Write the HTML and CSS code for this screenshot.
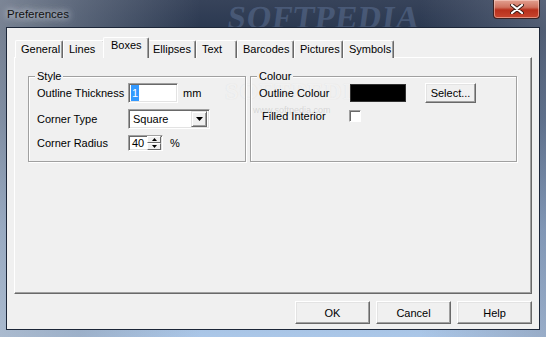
FILE: index.html
```html
<!DOCTYPE html>
<html>
<head>
<meta charset="utf-8">
<link rel="stylesheet" href="styles.css">
</head>
<body>
<div class="window">
  <div class="titlebar">
    <span class="title">Preferences</span>
    <span class="wm-title">SOFTPEDIA</span>
    <div class="close">
      <svg width="14" height="10" viewBox="0 0 14 10"><path d="M2 1 L12 9 M12 1 L2 9" stroke="#3a1a14" stroke-width="4" stroke-linecap="round"/><path d="M2 1 L12 9 M12 1 L2 9" stroke="#fff" stroke-width="2.2" stroke-linecap="round"/></svg>
    </div>
  </div>
  <div class="client">
    <div class="tabs">
      <div class="tab w-general">General</div>
      <div class="tab w-lines">Lines</div>
      <div class="tab active">Boxes</div>
      <div class="tab w-ellipses">Ellipses</div>
      <div class="tab w-text">Text</div>
      <div class="tab w-barcodes">Barcodes</div>
      <div class="tab w-pictures">Pictures</div>
      <div class="tab w-symbols">Symbols</div>
    </div>
    <div class="panel">
      <span class="wm-panel">SOFTPEDIA<small>www.softpedia.com</small></span>
      <div class="group g-style">
        <span class="legend">Style</span>
        <div class="row">
          <span class="lbl">Outline Thickness</span>
          <div class="edit e-thick"><span class="sel">1</span></div>
          <span class="unit">mm</span>
        </div>
        <div class="row">
          <span class="lbl">Corner Type</span>
          <div class="edit combo">
            <span class="combo-text">Square</span>
            <span class="drop"><svg width="7" height="4" viewBox="0 0 7 4"><path d="M0 0 H7 L3.5 4 Z" fill="#000"/></svg></span>
          </div>
        </div>
        <div class="row r-spin">
          <span class="lbl">Corner Radius</span>
          <div class="edit spin">
            <span class="spin-text">40</span>
            <span class="spin-btns">
              <span class="sbtn"><svg width="5" height="3" viewBox="0 0 5 3"><path d="M2.5 0 L5 3 H0 Z" fill="#000"/></svg></span>
              <span class="sbtn"><svg width="5" height="3" viewBox="0 0 5 3"><path d="M0 0 H5 L2.5 3 Z" fill="#000"/></svg></span>
            </span>
          </div>
          <span class="unit pct">%</span>
        </div>
      </div>
      <div class="group g-colour">
        <span class="legend">Colour</span>
        <div class="row">
          <span class="lbl">Outline Colour</span>
          <div class="swatch"></div>
          <div class="btn b-select">Select...</div>
        </div>
        <div class="row r-check">
          <span class="lbl l-check">Filled Interior</span>
          <div class="check"></div>
        </div>
      </div>
    </div>
    <div class="buttons">
      <div class="btn b-dlg">OK</div>
      <div class="btn b-dlg">Cancel</div>
      <div class="btn b-dlg">Help</div>
    </div>
  </div>
</div>
</body>
</html>
```

FILE: styles.css
```css
* { box-sizing: border-box; }
html, body { margin: 0; padding: 0; }
body {
  width: 546px;
  height: 337px;
  overflow: hidden;
  font-family: "Liberation Sans", Arial, sans-serif;
  font-size: 11px;
  color: #000;
}
.window {
  position: relative;
  width: 546px;
  height: 337px;
  display: flex;
  flex-direction: column;
  background:
    linear-gradient(90deg, rgba(170,178,190,0.6) 0, rgba(140,150,165,0.45) 80px, rgba(0,0,0,0) 200px, rgba(0,0,0,0) 420px, rgba(130,140,160,0.45) 546px),
    linear-gradient(180deg, #37435a 0, #2a3850 30px, #42597a 120px, #809fc6 230px, #abc7e8 337px);
}
.titlebar {
  position: relative;
  height: 27px;
  flex: none;
  display: flex;
  align-items: flex-start;
  justify-content: space-between;
}
.title {
  position: relative;
  z-index: 1;
  margin: 8px 0 0 7px;
  font-size: 11.5px;
  color: #111;
  line-height: 13px;
  text-shadow: 0 0 6px rgba(230,235,240,0.9), 0 0 10px rgba(220,225,235,0.8);
}
.wm-title {
  position: absolute;
  left: 228px;
  top: 1px;
  font-family: "Liberation Serif", serif;
  font-weight: bold;
  font-size: 32px;
  line-height: 32px;
  letter-spacing: 1px;
  color: rgba(95,115,150,0.5);
  transform: skewX(-8deg);
}
.close {
  position: relative;
  z-index: 1;
  width: 47px;
  height: 19px;
  margin-right: 6px;
  border: 1px solid #3b2222;
  border-top: none;
  border-radius: 0 0 4px 4px;
  background: linear-gradient(180deg, #e2a090 0, #d0725f 40%, #b8301c 55%, #c8452e 100%);
  box-shadow: inset 0 0 0 1px rgba(255,220,210,0.5);
  display: flex;
  align-items: center;
  justify-content: center;
}
.client {
  position: relative;
  z-index: 2;
  flex: 1;
  margin: 0 6px 7px 6px;
  border: 1px solid #1c2638;
  background: #f0f0f0;
  display: flex;
  flex-direction: column;
}
.tabs {
  display: flex;
  align-items: flex-end;
  padding: 9px 0 0 8px;
  margin-bottom: -1px;
  position: relative;
  z-index: 2;
}
.tab {
  height: 18px;
  border: 1px solid;
  border-color: #fff #696969 transparent #fff;
  border-bottom: none;
  border-radius: 2px 2px 0 0;
  box-shadow: inset -1px 0 0 #a0a0a0;
  background: #f0f0f0;
  padding: 2px 0 0 5px;
  line-height: 13px;
  white-space: nowrap;
}
.tab.active {
  height: 21px;
  width: 46px;
  margin: 0 -2px;
  padding: 1px 0 0 7px;
  position: relative;
  z-index: 3;
}
.w-general { width: 48px; }
.w-lines { width: 42px; }
.w-ellipses { width: 49px; }
.w-text { width: 41px; }
.w-barcodes { width: 57px; }
.w-pictures { width: 49px; }
.w-symbols { width: 51px; }
.panel {
  position: relative;
  margin-left: 7px;
  width: 518px;
  height: 237px;
  flex: none;
  border: 1px solid;
  border-color: #fff #696969 #696969 #fff;
  box-shadow: inset -1px -1px 0 #a0a0a0;
  padding: 18px 0 0 13px;
  display: flex;
  align-items: flex-start;
}
.group {
  position: relative;
  z-index: 1;
  height: 86px;
  border: 1px solid #a0a0a0;
  box-shadow: 1px 1px 0 #fff, inset 1px 1px 0 #fff;
  display: flex;
  flex-direction: column;
}
.g-style { width: 218px; }
.g-colour { width: 267px; margin-left: 4px; }
.legend {
  align-self: flex-start;
  margin: -7px 0 0 6px;
  padding: 0 2px;
  line-height: 13px;
  background: #f0f0f0;
}
.row {
  display: flex;
  align-items: center;
  height: 20px;
  padding-left: 8px;
  margin-bottom: 6px;
}
.r-spin { height: 16px; }
.r-check { margin-top: -3px; padding-left: 11px; }
.lbl { width: 91px; flex: none; white-space: nowrap; }
.l-check { width: 87px; }
.edit {
  height: 20px;
  background: #fff;
  border: 1px solid;
  border-color: #a0a0a0 #fff #fff #a0a0a0;
  box-shadow: inset 1px 1px 0 #696969, inset -1px -1px 0 #e3e3e3;
  display: flex;
  align-items: center;
}
.e-thick { width: 50px; padding-left: 2px; }
.sel {
  background: #3399ff;
  color: #fff;
  line-height: 16px;
  padding: 0 1px;
}
.unit { margin-left: 5px; }
.pct { margin-left: 7px; }
.combo { width: 82px; padding: 0 2px 0 4px; justify-content: space-between; }
.drop {
  width: 16px;
  height: 16px;
  background: #f0f0f0;
  border: 1px solid;
  border-color: #e3e3e3 #696969 #696969 #e3e3e3;
  box-shadow: inset 1px 1px 0 #fff, inset -1px -1px 0 #a0a0a0;
  display: flex;
  align-items: center;
  justify-content: center;
}
.spin { width: 35px; height: 16px; padding: 0 1px 0 3px; justify-content: space-between; }
.spin-btns { display: flex; flex-direction: column; }
.sbtn {
  width: 14px;
  height: 7px;
  background: #f0f0f0;
  border: 1px solid;
  border-color: #fff #696969 #696969 #fff;
  display: flex;
  align-items: center;
  justify-content: center;
}
.swatch {
  width: 56px;
  height: 18px;
  background: #000;
  border: 1px solid #333;
}
.btn {
  height: 20px;
  background: #f0f0f0;
  border: 1px solid;
  border-color: #fff #696969 #696969 #fff;
  box-shadow: inset -1px -1px 0 #a0a0a0, inset 1px 1px 0 #e3e3e3;
  display: flex;
  align-items: center;
  justify-content: center;
}
.b-select { width: 51px; margin-left: 19px; }
.check {
  width: 12px;
  height: 12px;
  background: #fff;
  border: 1px solid;
  border-color: #a0a0a0 #fff #fff #a0a0a0;
  box-shadow: inset 1px 1px 0 #696969;
}
.buttons {
  display: flex;
  justify-content: flex-end;
  gap: 6px;
  margin-top: 7px;
  padding-right: 7px;
}
.b-dlg { width: 75px; height: 23px; }
.wm-panel {
  position: absolute;
  z-index: 0;
  left: 210px;
  top: 20px;
  font-family: "Liberation Serif", serif;
  font-weight: bold;
  font-size: 24px;
  letter-spacing: 1px;
  color: rgba(255,255,255,0.6);
  text-shadow: 0 0 1px rgba(170,170,170,0.3);
  line-height: 26px;
  pointer-events: none;
}
.wm-panel small {
  display: block;
  font-family: "Liberation Sans", sans-serif;
  font-weight: normal;
  font-size: 9px;
  letter-spacing: 0;
  line-height: 12px;
  margin-left: 28px;
  color: rgba(150,150,150,0.3);
  text-shadow: none;
}
```
